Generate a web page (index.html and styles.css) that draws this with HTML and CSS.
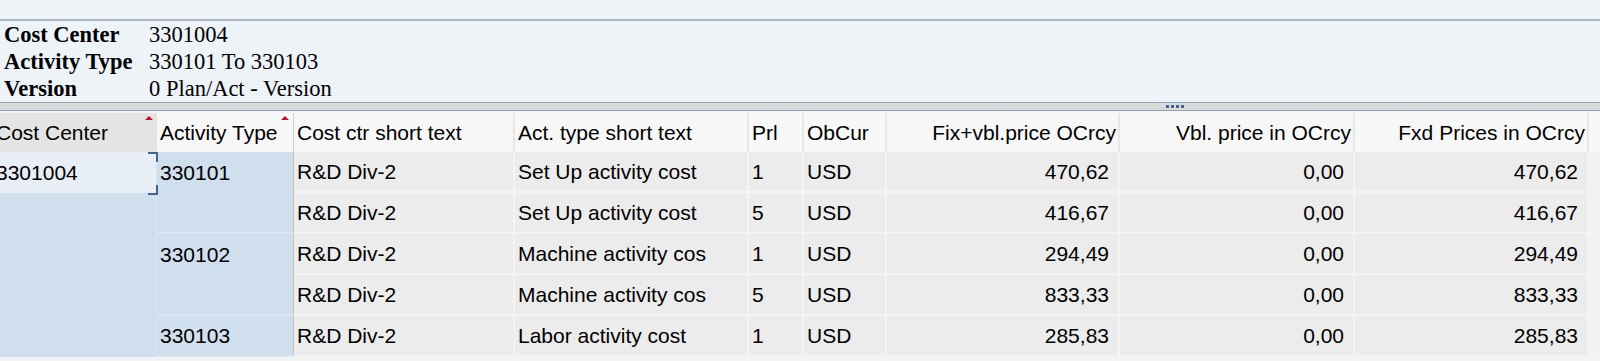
FILE: index.html
```html
<!doctype html>
<html lang="en">
	<head>
		<meta charset="UTF-8">
		<title>Activity Price Report</title>
		<link rel="stylesheet" href="styles.css">
	</head>

	<body>
		<div class="page">
			<div class="toolbar-gap"></div>

			<!-- selection criteria -->
			<div class="criteria">
				<div class="crit-label">Cost Center</div>
				<div class="crit-value">3301004</div>
				<div class="crit-label">Activity Type</div>
				<div class="crit-value">330101 To 330103</div>
				<div class="crit-label">Version</div>
				<div class="crit-value">0 Plan/Act - Version</div>
			</div>

			<div class="splitter">
				<div class="grip"><span></span><span></span><span></span><span></span></div>
			</div>

			<div class="grid-wrap">
				<div class="grid">
					<div class="hd hd-key sorted">Cost Center</div>
					<div class="hd hd-key2 sorted">Activity Type</div>
					<div class="hd">Cost ctr short text</div>
					<div class="hd">Act. type short text</div>
					<div class="hd">Prl</div>
					<div class="hd">ObCur</div>
					<div class="hd num">Fix+vbl.price OCrcy</div>
					<div class="hd num">Vbl. price in OCrcy</div>
					<div class="hd num">Fxd Prices in OCrcy</div>
					<div class="hd hd-rest"></div>

					<!-- row 1 -->
					<div class="key sel">3301004</div>
					<div class="key key2 span2">330101</div>
					<div class="cell">R&amp;D Div-2</div>
					<div class="cell">Set Up activity cost</div>
					<div class="cell">1</div>
					<div class="cell">USD</div>
					<div class="cell num">470,62</div>
					<div class="cell num">0,00</div>
					<div class="cell num">470,62</div>
					<div class="cell rest"></div>

					<!-- row 2 -->
					<div class="key span4"></div>
					<div class="cell">R&amp;D Div-2</div>
					<div class="cell">Set Up activity cost</div>
					<div class="cell">5</div>
					<div class="cell">USD</div>
					<div class="cell num">416,67</div>
					<div class="cell num">0,00</div>
					<div class="cell num">416,67</div>
					<div class="cell rest"></div>

					<!-- row 3 -->
					<div class="key key2 span2">330102</div>
					<div class="cell">R&amp;D Div-2</div>
					<div class="cell">Machine activity cos</div>
					<div class="cell">1</div>
					<div class="cell">USD</div>
					<div class="cell num">294,49</div>
					<div class="cell num">0,00</div>
					<div class="cell num">294,49</div>
					<div class="cell rest"></div>

					<!-- row 4 -->
					<div class="cell">R&amp;D Div-2</div>
					<div class="cell">Machine activity cos</div>
					<div class="cell">5</div>
					<div class="cell">USD</div>
					<div class="cell num">833,33</div>
					<div class="cell num">0,00</div>
					<div class="cell num">833,33</div>
					<div class="cell rest"></div>

					<!-- row 5 -->
					<div class="key key2">330103</div>
					<div class="cell">R&amp;D Div-2</div>
					<div class="cell">Labor activity cost</div>
					<div class="cell">1</div>
					<div class="cell">USD</div>
					<div class="cell num">285,83</div>
					<div class="cell num">0,00</div>
					<div class="cell num">285,83</div>
					<div class="cell rest"></div>
				</div>
			</div>
		</div>
	</body>
</html>
```

FILE: styles.css
```css
* {
	padding: 0;
	margin: 0;
	box-sizing: border-box;
}
body {
	background-color: #eef3f8;
	color: #000;
	font-family: "Liberation Sans", Arial, sans-serif;
	font-size: 21px;
	overflow: hidden;
}
.page {
	width: 1600px;
	height: 361px;
	overflow: hidden;
}
.toolbar-gap {
	height: 19px;
}

/* selection criteria block */
.criteria {
	display: grid;
	grid-template-columns: 145px 1fr;
	height: 84px;
	padding: 0 4px;
	border-top: 2px solid #a9b7c6;
	border-bottom: 1px solid #8ea5bc;
	font-family: "Liberation Serif", "Times New Roman", serif;
	font-size: 22.5px;
	line-height: 27px;
	align-content: start;
}
.crit-label {
	font-weight: bold;
}

.splitter {
	height: 8px;
	background-color: #dadada;
	border-bottom: 1px solid #8ea5bc;
	display: flex;
	align-items: center;
	padding-left: 1166px;
}
.grip {
	display: flex;
	gap: 2px;
}
.grip span {
	width: 3px;
	height: 3px;
	background-color: #3b6791;
}

.grid-wrap {
	height: 250px;
	padding-top: 2px;
	background-color: #f3f3f3;
	overflow: hidden;
}
.grid {
	display: grid;
	grid-template-columns: 164px 137px 221px 234px 55px 83px 233px 235px 234px 1fr;
	grid-template-rows: 39px repeat(5, 41px);
	margin-left: -7px;
	width: 1614px;
}
.grid > div {
	display: flex;
	align-items: center;
	padding: 0 3px;
	white-space: nowrap;
	overflow: hidden;
}

/* header row */
.hd {
	background-color: #f7f7f7;
	border-right: 2px solid #e6e6e6;
	position: relative;
}
.hd-key {
	background-color: #e4e4e4;
	border-right: none;
}
.hd-key2 {
	border-right: 1px solid #cfcfcf;
}
.hd.num {
	justify-content: flex-end;
	padding-right: 2px;
}
.hd-rest {
	border-right: none;
}
.sorted::after {
	content: "";
	position: absolute;
	top: 3px;
	right: 4px;
	border-left: 4px solid transparent;
	border-right: 4px solid transparent;
	border-bottom: 4px solid #c8102e;
}

/* data cells */
.cell {
	background-color: #ececec;
	border-right: 2px solid #f4f4f4;
	border-bottom: 2px solid #f4f4f4;
}
.cell.num {
	justify-content: flex-end;
	padding-right: 9px;
}
.cell.rest {
	background-color: #f2f2f2;
	border-right: none;
}

/* key columns */
.key {
	background-color: #d0dfee;
	border-right: 1px solid #dbe5f0;
	border-bottom: 2px solid #dbe5f0;
}
.key2 {
	border-right: 1px solid #c4c4c4;
}
.span2 {
	grid-row: span 2;
	align-items: flex-start !important;
	padding-top: 9px !important;
}
.span4 {
	grid-row: span 4;
	border-bottom: none;
}
.sel {
	background-color: #e7eef6;
	border-bottom: none;
	position: relative;
	overflow: visible !important;
	z-index: 1;
}
.sel::before,
.sel::after {
	content: "";
	position: absolute;
	right: -2px;
	width: 8px;
	height: 8px;
	border-right: 2px solid #3b6791;
}
.sel::before {
	top: 0;
	border-top: 2px solid #3b6791;
}
.sel::after {
	bottom: -2px;
	border-bottom: 2px solid #3b6791;
}
```
